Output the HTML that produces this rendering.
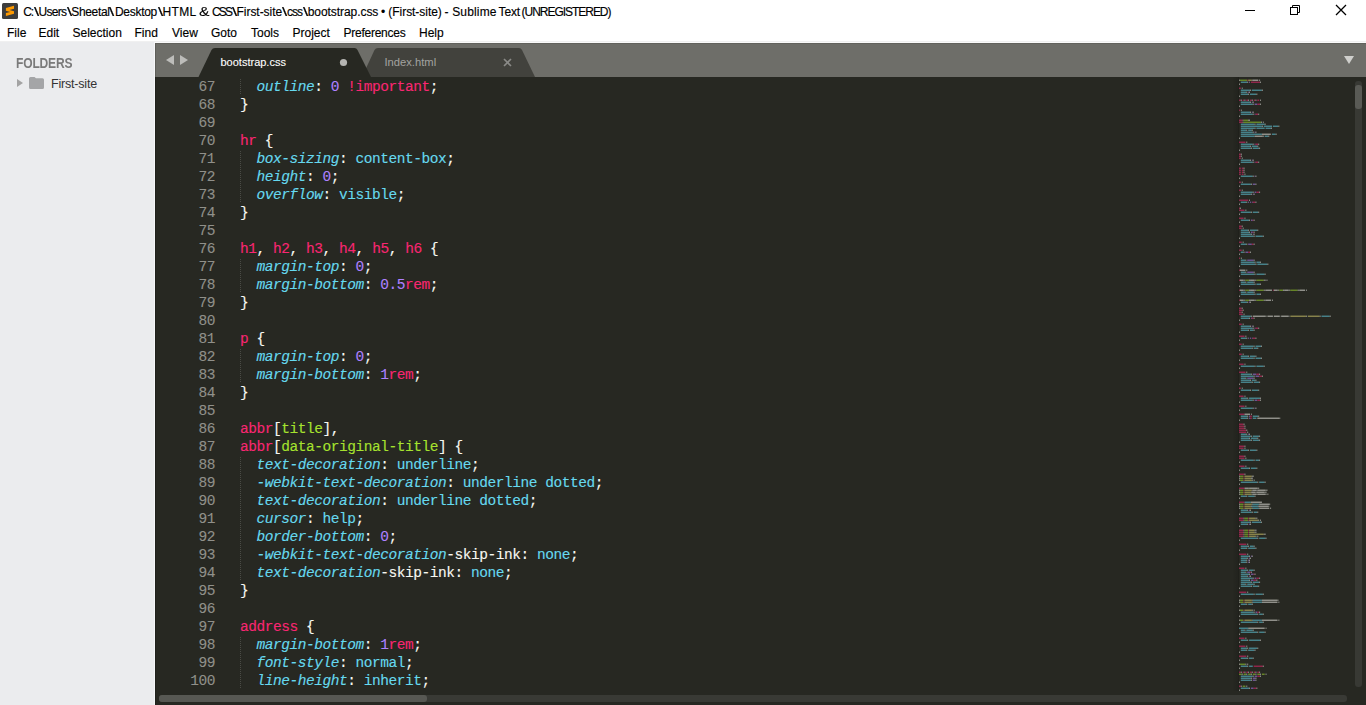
<!DOCTYPE html>
<html><head><meta charset="utf-8"><title>Sublime Text</title>
<style>
*{margin:0;padding:0;box-sizing:border-box}
html,body{width:1366px;height:705px;overflow:hidden;background:#fff}
body{position:relative;font-family:"Liberation Sans",sans-serif}
.abs{position:absolute}
#titlebar{position:absolute;left:0;top:0;width:1366px;height:41px;background:#fff}
#title{position:absolute;left:23.5px;top:4px;font-size:12px;letter-spacing:-0.2px;color:#000;white-space:pre;line-height:16px}
.ts{position:absolute;top:4px;font-size:12px;color:#000;white-space:pre;line-height:16px;-webkit-text-stroke:0.15px #000}
.mi{position:absolute;top:25px;font-size:12px;color:#000;line-height:16px;white-space:pre;-webkit-text-stroke:0.15px #000}
#sep1{position:absolute;left:0;top:41px;width:1366px;height:1px;background:#f0f0f0}
#sidebar{position:absolute;left:0;top:42px;width:154px;height:663px;background:#ebecee}
#sbedge{position:absolute;left:154px;top:42px;width:1px;height:663px;background:#f6f7f9}
#folders{position:absolute;left:15.8px;top:55px;font-size:14px;font-weight:bold;color:#7a7a7a;line-height:16px;letter-spacing:-0.2px;transform:scaleX(0.86);transform-origin:0 0}
#fsite{position:absolute;left:51px;top:76px;font-size:12.5px;color:#333;line-height:16px;letter-spacing:-0.2px}
#editor{position:absolute;left:155px;top:42px;width:1211px;height:663px;background:#272822;overflow:hidden}
#tabbar{position:absolute;left:155px;top:43px;width:1211px;height:34px;background:#6e6e69;border-top:1px solid #62625d;border-left:1px solid #5e5e59}
#edtop{position:absolute;left:155px;top:42px;width:1211px;height:1px;background:#fafafa}
.ln{position:absolute;left:156px;width:59px;text-align:right;font-family:"Liberation Mono",monospace;font-size:14.5px;letter-spacing:-0.45px;line-height:18px;color:#90908a;white-space:pre;-webkit-text-stroke:0.12px currentColor}
.cl{position:absolute;left:240px;font-family:"Liberation Mono",monospace;font-size:14.5px;letter-spacing:-0.45px;line-height:18px;color:#f8f8f2;white-space:pre;-webkit-text-stroke:0.12px currentColor}
.t{color:#f92672}.u{color:#f92672}.p{color:#66d9ef;font-style:italic}.v{color:#66d9ef}.n{color:#ae81ff}.w{color:#f8f8f2}.g{color:#a6e22e}.y{color:#e6db74}
.ig{position:absolute;left:240px;width:1px;background-image:linear-gradient(#4a4b45 50%,transparent 50%);background-size:1px 2px}
.mini{position:absolute;left:-1238px;top:-77px;opacity:0.5}
#minimap{position:absolute;left:1238px;top:77px;width:110px;height:628px;overflow:hidden}
.mtxt{position:absolute;left:1px;top:2px;font-family:"Liberation Mono",monospace;font-size:13.75px;line-height:18px;white-space:pre;color:#f8f8f2;transform:scale(0.11111);transform-origin:0 0;opacity:1}
#mmedge{position:absolute;left:1238px;top:77px;width:1px;height:614px;background:#1f201b}
#mmshadow{position:absolute;left:1232px;top:77px;width:6px;height:614px;background:linear-gradient(90deg,rgba(0,0,0,0),rgba(0,0,0,0.12))}
#vtrack{position:absolute;left:1355px;top:81px;width:7px;height:606px;background:#383934;border-radius:3px}
#vthumb{position:absolute;left:1355px;top:85px;width:7px;height:24px;background:#595a55;border-radius:3px}
#htrack{position:absolute;left:159px;top:695px;width:1188px;height:7px;background:#393a35;border-radius:3px}
#hthumb{position:absolute;left:159px;top:695px;width:268px;height:7px;background:#575853;border-radius:3px}
</style></head><body>
<div id="titlebar"></div>
<svg class="abs" style="left:0;top:0" width="22" height="22" viewBox="0 0 22 22">
<rect x="2" y="3" width="16" height="16" rx="1.5" fill="#3d3d3d"/>
<polygon points="5.9,8 14,5.8 14,8.7 9.4,10 14,11.2 14,13.7 5.9,16.1 5.9,13.1 10.3,12 5.9,10.8" fill="#ff9a00"/>
</svg>
<span class="ts" style="left:23.14px;letter-spacing:-1.024px">C:</span><span class="ts" style="left:33.67px;letter-spacing:0px;transform:scaleX(1.55);transform-origin:0 0">\</span><span class="ts" style="left:38.6px;letter-spacing:-0.742px">Users</span><span class="ts" style="left:66.67px;letter-spacing:0px;transform:scaleX(1.55);transform-origin:0 0">\</span><span class="ts" style="left:71.24px;letter-spacing:-0.333px">Sheetal</span><span class="ts" style="left:109.47px;letter-spacing:0px;transform:scaleX(1.55);transform-origin:0 0">\</span><span class="ts" style="left:114.98px;letter-spacing:-0.286px">Desktop</span><span class="ts" style="left:157.57px;letter-spacing:0px;transform:scaleX(1.55);transform-origin:0 0">\</span><span class="ts" style="left:162.48px;letter-spacing:0.373px">HTML</span><span class="ts" style="left:198.79px;letter-spacing:0px;transform:scaleX(1.3);transform-origin:0 0">&amp;</span><span class="ts" style="left:212.04px;letter-spacing:-1.835px">CSS</span><span class="ts" style="left:232.17px;letter-spacing:0px;transform:scaleX(1.55);transform-origin:0 0">\</span><span class="ts" style="left:236.58px;letter-spacing:-0.051px">First-site</span><span class="ts" style="left:281.87px;letter-spacing:0px;transform:scaleX(1.55);transform-origin:0 0">\</span><span class="ts" style="left:287.12px;letter-spacing:-1.082px">css</span><span class="ts" style="left:302.77px;letter-spacing:0px;transform:scaleX(1.55);transform-origin:0 0">\</span><span class="ts" style="left:307.7px;letter-spacing:-0.058px">bootstrap.css</span><span class="ts" style="left:381.07px;letter-spacing:0px">•</span><span class="ts" style="left:388.36px;letter-spacing:-0.052px">(First-site)</span><span class="ts" style="left:444.4px;letter-spacing:0px">-</span><span class="ts" style="left:452.14px;letter-spacing:0.166px">Sublime</span><span class="ts" style="left:498.57px;letter-spacing:-0.154px">Text</span><span class="ts" style="left:521.56px;letter-spacing:-1.029px">(UNREGISTERED)</span>
<div class="mi" style="left:7px">File</div><div class="mi" style="left:38.5px">Edit</div><div class="mi" style="left:72.5px">Selection</div><div class="mi" style="left:134.5px">Find</div><div class="mi" style="left:172px">View</div><div class="mi" style="left:211px">Goto</div><div class="mi" style="left:251px">Tools</div><div class="mi" style="left:292.5px">Project</div><div class="mi" style="left:343.5px;letter-spacing:-0.25px">Preferences</div><div class="mi" style="left:419px">Help</div>
<svg class="abs" style="left:1236px;top:0" width="130" height="22" viewBox="1236 0 130 22">
<rect x="1245" y="10" width="10" height="1" fill="#000"/>
<path d="M1292.5 7V5.5H1299.5V12.5H1298" fill="none" stroke="#000" stroke-width="1" stroke-linejoin="miter" stroke-linecap="square"/>
<rect x="1290.5" y="7.5" width="7" height="7" fill="none" stroke="#000" stroke-width="1"/>
<path d="M1336 5L1346 15M1346 5L1336 15" stroke="#000" stroke-width="1.3"/>
</svg>
<div id="sep1"></div>
<div id="sidebar"></div>
<div id="sbedge"></div>
<div id="folders">FOLDERS</div>
<svg class="abs" style="left:0;top:70px" width="60" height="25" viewBox="0 70 60 25">
<polygon points="17,79 23,83 17,87" fill="#a3a3a3"/>
<path d="M29 78.5Q29 77 30.5 77H34.5L36 78.2H42.5Q44 78.2 44 79.7V87.5Q44 89 42.5 89H30.5Q29 89 29 87.5Z" fill="#a4a5a7"/>
</svg>
<div id="fsite">First-site</div>
<div id="editor"></div>
<div id="edtop"></div><div class="abs" style="left:155px;top:77px;width:1px;height:628px;background:#20211c"></div>
<div id="tabbar"></div>
<svg class="abs" style="left:155px;top:43px" width="1211" height="35" viewBox="155 43 1211 35">
<polygon points="166,60 174,55 174,65" fill="#bdbdba"/>
<polygon points="188,60 180,55 180,65" fill="#bdbdba"/>
<path d="M362,77 L374.5,50 Q375.5,48 378,48 L519,48 Q521,48 522,50 L535,77 Z" fill="#42423d"/>
<path d="M198.5,77 L211.5,50 Q212.5,48 215,48 L354.5,48 Q356.5,48 357.5,50 L371,77 Z" fill="#272822"/>
<circle cx="343.5" cy="62.5" r="3.6" fill="#b5b5b2"/>
<path d="M504 59L511 66M511 59L504 66" stroke="#8a8a87" stroke-width="1.6"/>
<polygon points="1344,56 1354,56 1349,64" fill="#cfcfcc"/>
</svg>
<div class="abs" style="left:220.5px;top:54px;font-size:11px;color:#fff;line-height:16px;-webkit-text-stroke:0.1px #fff">bootstrap.css</div>
<div class="abs" style="left:384.5px;top:54px;font-size:11.2px;color:#a3a3a0;line-height:16px">Index.html</div>
<div class="ln" style="top:78px">67</div><div class="ln" style="top:96px">68</div><div class="ln" style="top:114px">69</div><div class="ln" style="top:132px">70</div><div class="ln" style="top:150px">71</div><div class="ln" style="top:168px">72</div><div class="ln" style="top:186px">73</div><div class="ln" style="top:204px">74</div><div class="ln" style="top:222px">75</div><div class="ln" style="top:240px">76</div><div class="ln" style="top:258px">77</div><div class="ln" style="top:276px">78</div><div class="ln" style="top:294px">79</div><div class="ln" style="top:312px">80</div><div class="ln" style="top:330px">81</div><div class="ln" style="top:348px">82</div><div class="ln" style="top:366px">83</div><div class="ln" style="top:384px">84</div><div class="ln" style="top:402px">85</div><div class="ln" style="top:420px">86</div><div class="ln" style="top:438px">87</div><div class="ln" style="top:456px">88</div><div class="ln" style="top:474px">89</div><div class="ln" style="top:492px">90</div><div class="ln" style="top:510px">91</div><div class="ln" style="top:528px">92</div><div class="ln" style="top:546px">93</div><div class="ln" style="top:564px">94</div><div class="ln" style="top:582px">95</div><div class="ln" style="top:600px">96</div><div class="ln" style="top:618px">97</div><div class="ln" style="top:636px">98</div><div class="ln" style="top:654px">99</div><div class="ln" style="top:672px">100</div>
<div class="ig" style="top:79px;height:15px"></div><div class="ig" style="top:151px;height:51px"></div><div class="ig" style="top:259px;height:33px"></div><div class="ig" style="top:349px;height:33px"></div><div class="ig" style="top:457px;height:123px"></div><div class="ig" style="top:637px;height:51px"></div>
<div class="cl" style="top:78px">  <span class="p">outline</span><span class="w">: </span><span class="n">0</span><span class="w"> </span><span class="u">!important</span><span class="w">;</span></div><div class="cl" style="top:96px"><span class="w">}</span></div><div class="cl" style="top:114px"></div><div class="cl" style="top:132px"><span class="t">hr</span><span class="w"> {</span></div><div class="cl" style="top:150px">  <span class="p">box-sizing</span><span class="w">: </span><span class="v">content-box</span><span class="w">;</span></div><div class="cl" style="top:168px">  <span class="p">height</span><span class="w">: </span><span class="n">0</span><span class="w">;</span></div><div class="cl" style="top:186px">  <span class="p">overflow</span><span class="w">: </span><span class="v">visible</span><span class="w">;</span></div><div class="cl" style="top:204px"><span class="w">}</span></div><div class="cl" style="top:222px"></div><div class="cl" style="top:240px"><span class="t">h1</span><span class="w">, </span><span class="t">h2</span><span class="w">, </span><span class="t">h3</span><span class="w">, </span><span class="t">h4</span><span class="w">, </span><span class="t">h5</span><span class="w">, </span><span class="t">h6</span><span class="w"> {</span></div><div class="cl" style="top:258px">  <span class="p">margin-top</span><span class="w">: </span><span class="n">0</span><span class="w">;</span></div><div class="cl" style="top:276px">  <span class="p">margin-bottom</span><span class="w">: </span><span class="n">0.5</span><span class="u">rem</span><span class="w">;</span></div><div class="cl" style="top:294px"><span class="w">}</span></div><div class="cl" style="top:312px"></div><div class="cl" style="top:330px"><span class="t">p</span><span class="w"> {</span></div><div class="cl" style="top:348px">  <span class="p">margin-top</span><span class="w">: </span><span class="n">0</span><span class="w">;</span></div><div class="cl" style="top:366px">  <span class="p">margin-bottom</span><span class="w">: </span><span class="n">1</span><span class="u">rem</span><span class="w">;</span></div><div class="cl" style="top:384px"><span class="w">}</span></div><div class="cl" style="top:402px"></div><div class="cl" style="top:420px"><span class="t">abbr</span><span class="w">[</span><span class="g">title</span><span class="w">],</span></div><div class="cl" style="top:438px"><span class="t">abbr</span><span class="w">[</span><span class="g">data-original-title</span><span class="w">] {</span></div><div class="cl" style="top:456px">  <span class="p">text-decoration</span><span class="w">: </span><span class="v">underline</span><span class="w">;</span></div><div class="cl" style="top:474px">  <span class="p">-webkit-text-decoration</span><span class="w">: </span><span class="v">underline dotted</span><span class="w">;</span></div><div class="cl" style="top:492px">  <span class="p">text-decoration</span><span class="w">: </span><span class="v">underline dotted</span><span class="w">;</span></div><div class="cl" style="top:510px">  <span class="p">cursor</span><span class="w">: </span><span class="v">help</span><span class="w">;</span></div><div class="cl" style="top:528px">  <span class="p">border-bottom</span><span class="w">: </span><span class="n">0</span><span class="w">;</span></div><div class="cl" style="top:546px">  <span class="p">-webkit-text-decoration</span><span class="w">-skip-ink: </span><span class="v">none</span><span class="w">;</span></div><div class="cl" style="top:564px">  <span class="p">text-decoration</span><span class="w">-skip-ink: </span><span class="v">none</span><span class="w">;</span></div><div class="cl" style="top:582px"><span class="w">}</span></div><div class="cl" style="top:600px"></div><div class="cl" style="top:618px"><span class="t">address</span><span class="w"> {</span></div><div class="cl" style="top:636px">  <span class="p">margin-bottom</span><span class="w">: </span><span class="n">1</span><span class="u">rem</span><span class="w">;</span></div><div class="cl" style="top:654px">  <span class="p">font-style</span><span class="w">: </span><span class="v">normal</span><span class="w">;</span></div><div class="cl" style="top:672px">  <span class="p">line-height</span><span class="w">: </span><span class="v">inherit</span><span class="w">;</span></div>
<div id="minimap"><svg class="mini" width="1366" height="705" viewBox="0 0 1366 705"><defs><pattern id="mp" x="0" y="79" width="4" height="2" patternUnits="userSpaceOnUse"><rect x="0" y="0" width="4" height="1" fill="#777"/><rect x="0" y="1" width="4" height="1" fill="#fff"/></pattern><mask id="mm"><rect x="1200" y="0" width="166" height="705" fill="url(#mp)"/></mask></defs><g mask="url(#mm)"><rect x="1239.00" y="79" width="0.92" height="2" fill="#F8F8F2"/><rect x="1239.92" y="79" width="7.33" height="2" fill="#A6E22E"/><rect x="1247.25" y="79" width="0.92" height="2" fill="#F92672"/><rect x="1248.17" y="79" width="3.67" height="2" fill="#E6DB74"/><rect x="1251.83" y="79" width="0.92" height="2" fill="#F8F8F2"/><rect x="1252.75" y="79" width="5.50" height="2" fill="#F8F8F2"/><rect x="1259.17" y="79" width="0.92" height="2" fill="#F8F8F2"/><rect x="1240.83" y="81" width="6.42" height="2" fill="#66D9EF"/><rect x="1247.25" y="81" width="0.92" height="2" fill="#F8F8F2"/><rect x="1249.08" y="81" width="0.92" height="2" fill="#AE81FF"/><rect x="1250.92" y="81" width="9.17" height="2" fill="#F92672"/><rect x="1260.08" y="81" width="0.92" height="2" fill="#F8F8F2"/><rect x="1239.00" y="83" width="0.92" height="2" fill="#F8F8F2"/><rect x="1239.00" y="87" width="1.83" height="2" fill="#F92672"/><rect x="1241.75" y="87" width="0.92" height="2" fill="#F8F8F2"/><rect x="1240.83" y="89" width="9.17" height="2" fill="#66D9EF"/><rect x="1250.00" y="89" width="0.92" height="2" fill="#F8F8F2"/><rect x="1251.83" y="89" width="10.08" height="2" fill="#66D9EF"/><rect x="1261.92" y="89" width="0.92" height="2" fill="#F8F8F2"/><rect x="1240.83" y="91" width="5.50" height="2" fill="#66D9EF"/><rect x="1246.33" y="91" width="0.92" height="2" fill="#F8F8F2"/><rect x="1248.17" y="91" width="0.92" height="2" fill="#AE81FF"/><rect x="1249.08" y="91" width="0.92" height="2" fill="#F8F8F2"/><rect x="1240.83" y="93" width="7.33" height="2" fill="#66D9EF"/><rect x="1248.17" y="93" width="0.92" height="2" fill="#F8F8F2"/><rect x="1250.00" y="93" width="6.42" height="2" fill="#66D9EF"/><rect x="1256.42" y="93" width="0.92" height="2" fill="#F8F8F2"/><rect x="1239.00" y="95" width="0.92" height="2" fill="#F8F8F2"/><rect x="1239.00" y="99" width="1.83" height="2" fill="#F92672"/><rect x="1240.83" y="99" width="0.92" height="2" fill="#F8F8F2"/><rect x="1242.67" y="99" width="1.83" height="2" fill="#F92672"/><rect x="1244.50" y="99" width="0.92" height="2" fill="#F8F8F2"/><rect x="1246.33" y="99" width="1.83" height="2" fill="#F92672"/><rect x="1248.17" y="99" width="0.92" height="2" fill="#F8F8F2"/><rect x="1250.00" y="99" width="1.83" height="2" fill="#F92672"/><rect x="1251.83" y="99" width="0.92" height="2" fill="#F8F8F2"/><rect x="1253.67" y="99" width="1.83" height="2" fill="#F92672"/><rect x="1255.50" y="99" width="0.92" height="2" fill="#F8F8F2"/><rect x="1257.33" y="99" width="1.83" height="2" fill="#F92672"/><rect x="1260.08" y="99" width="0.92" height="2" fill="#F8F8F2"/><rect x="1240.83" y="101" width="9.17" height="2" fill="#66D9EF"/><rect x="1250.00" y="101" width="0.92" height="2" fill="#F8F8F2"/><rect x="1251.83" y="101" width="0.92" height="2" fill="#AE81FF"/><rect x="1252.75" y="101" width="0.92" height="2" fill="#F8F8F2"/><rect x="1240.83" y="103" width="11.92" height="2" fill="#66D9EF"/><rect x="1252.75" y="103" width="0.92" height="2" fill="#F8F8F2"/><rect x="1254.58" y="103" width="2.75" height="2" fill="#AE81FF"/><rect x="1257.33" y="103" width="2.75" height="2" fill="#F92672"/><rect x="1260.08" y="103" width="0.92" height="2" fill="#F8F8F2"/><rect x="1239.00" y="105" width="0.92" height="2" fill="#F8F8F2"/><rect x="1239.00" y="109" width="0.92" height="2" fill="#F92672"/><rect x="1240.83" y="109" width="0.92" height="2" fill="#F8F8F2"/><rect x="1240.83" y="111" width="9.17" height="2" fill="#66D9EF"/><rect x="1250.00" y="111" width="0.92" height="2" fill="#F8F8F2"/><rect x="1251.83" y="111" width="0.92" height="2" fill="#AE81FF"/><rect x="1252.75" y="111" width="0.92" height="2" fill="#F8F8F2"/><rect x="1240.83" y="113" width="11.92" height="2" fill="#66D9EF"/><rect x="1252.75" y="113" width="0.92" height="2" fill="#F8F8F2"/><rect x="1254.58" y="113" width="0.92" height="2" fill="#AE81FF"/><rect x="1255.50" y="113" width="2.75" height="2" fill="#F92672"/><rect x="1258.25" y="113" width="0.92" height="2" fill="#F8F8F2"/><rect x="1239.00" y="115" width="0.92" height="2" fill="#F8F8F2"/><rect x="1239.00" y="119" width="3.67" height="2" fill="#F92672"/><rect x="1242.67" y="119" width="0.92" height="2" fill="#F8F8F2"/><rect x="1243.58" y="119" width="4.58" height="2" fill="#A6E22E"/><rect x="1248.17" y="119" width="0.92" height="2" fill="#F8F8F2"/><rect x="1249.08" y="119" width="0.92" height="2" fill="#F8F8F2"/><rect x="1239.00" y="121" width="3.67" height="2" fill="#F92672"/><rect x="1242.67" y="121" width="0.92" height="2" fill="#F8F8F2"/><rect x="1243.58" y="121" width="17.42" height="2" fill="#A6E22E"/><rect x="1261.00" y="121" width="0.92" height="2" fill="#F8F8F2"/><rect x="1262.83" y="121" width="0.92" height="2" fill="#F8F8F2"/><rect x="1240.83" y="123" width="13.75" height="2" fill="#66D9EF"/><rect x="1254.58" y="123" width="0.92" height="2" fill="#F8F8F2"/><rect x="1256.42" y="123" width="8.25" height="2" fill="#66D9EF"/><rect x="1264.67" y="123" width="0.92" height="2" fill="#F8F8F2"/><rect x="1240.83" y="125" width="21.08" height="2" fill="#66D9EF"/><rect x="1261.92" y="125" width="0.92" height="2" fill="#F8F8F2"/><rect x="1263.75" y="125" width="8.25" height="2" fill="#66D9EF"/><rect x="1272.92" y="125" width="5.50" height="2" fill="#66D9EF"/><rect x="1278.42" y="125" width="0.92" height="2" fill="#F8F8F2"/><rect x="1240.83" y="127" width="13.75" height="2" fill="#66D9EF"/><rect x="1254.58" y="127" width="0.92" height="2" fill="#F8F8F2"/><rect x="1256.42" y="127" width="8.25" height="2" fill="#66D9EF"/><rect x="1265.58" y="127" width="5.50" height="2" fill="#66D9EF"/><rect x="1271.08" y="127" width="0.92" height="2" fill="#F8F8F2"/><rect x="1240.83" y="129" width="5.50" height="2" fill="#66D9EF"/><rect x="1246.33" y="129" width="0.92" height="2" fill="#F8F8F2"/><rect x="1248.17" y="129" width="3.67" height="2" fill="#66D9EF"/><rect x="1251.83" y="129" width="0.92" height="2" fill="#F8F8F2"/><rect x="1240.83" y="131" width="11.92" height="2" fill="#66D9EF"/><rect x="1252.75" y="131" width="0.92" height="2" fill="#F8F8F2"/><rect x="1254.58" y="131" width="0.92" height="2" fill="#AE81FF"/><rect x="1255.50" y="131" width="0.92" height="2" fill="#F8F8F2"/><rect x="1240.83" y="133" width="21.08" height="2" fill="#66D9EF"/><rect x="1261.92" y="133" width="8.25" height="2" fill="#F8F8F2"/><rect x="1270.17" y="133" width="0.92" height="2" fill="#F8F8F2"/><rect x="1272.00" y="133" width="3.67" height="2" fill="#66D9EF"/><rect x="1275.67" y="133" width="0.92" height="2" fill="#F8F8F2"/><rect x="1240.83" y="135" width="13.75" height="2" fill="#66D9EF"/><rect x="1254.58" y="135" width="8.25" height="2" fill="#F8F8F2"/><rect x="1262.83" y="135" width="0.92" height="2" fill="#F8F8F2"/><rect x="1264.67" y="135" width="3.67" height="2" fill="#66D9EF"/><rect x="1268.33" y="135" width="0.92" height="2" fill="#F8F8F2"/><rect x="1239.00" y="137" width="0.92" height="2" fill="#F8F8F2"/><rect x="1239.00" y="141" width="6.42" height="2" fill="#F92672"/><rect x="1246.33" y="141" width="0.92" height="2" fill="#F8F8F2"/><rect x="1240.83" y="143" width="11.92" height="2" fill="#66D9EF"/><rect x="1252.75" y="143" width="0.92" height="2" fill="#F8F8F2"/><rect x="1254.58" y="143" width="0.92" height="2" fill="#AE81FF"/><rect x="1255.50" y="143" width="2.75" height="2" fill="#F92672"/><rect x="1258.25" y="143" width="0.92" height="2" fill="#F8F8F2"/><rect x="1240.83" y="145" width="9.17" height="2" fill="#66D9EF"/><rect x="1250.00" y="145" width="0.92" height="2" fill="#F8F8F2"/><rect x="1251.83" y="145" width="5.50" height="2" fill="#66D9EF"/><rect x="1257.33" y="145" width="0.92" height="2" fill="#F8F8F2"/><rect x="1240.83" y="147" width="10.08" height="2" fill="#66D9EF"/><rect x="1250.92" y="147" width="0.92" height="2" fill="#F8F8F2"/><rect x="1252.75" y="147" width="6.42" height="2" fill="#66D9EF"/><rect x="1259.17" y="147" width="0.92" height="2" fill="#F8F8F2"/><rect x="1239.00" y="149" width="0.92" height="2" fill="#F8F8F2"/><rect x="1239.00" y="153" width="1.83" height="2" fill="#F92672"/><rect x="1240.83" y="153" width="0.92" height="2" fill="#F8F8F2"/><rect x="1239.00" y="155" width="1.83" height="2" fill="#F92672"/><rect x="1240.83" y="155" width="0.92" height="2" fill="#F8F8F2"/><rect x="1239.00" y="157" width="1.83" height="2" fill="#F92672"/><rect x="1241.75" y="157" width="0.92" height="2" fill="#F8F8F2"/><rect x="1240.83" y="159" width="9.17" height="2" fill="#66D9EF"/><rect x="1250.00" y="159" width="0.92" height="2" fill="#F8F8F2"/><rect x="1251.83" y="159" width="0.92" height="2" fill="#AE81FF"/><rect x="1252.75" y="159" width="0.92" height="2" fill="#F8F8F2"/><rect x="1240.83" y="161" width="11.92" height="2" fill="#66D9EF"/><rect x="1252.75" y="161" width="0.92" height="2" fill="#F8F8F2"/><rect x="1254.58" y="161" width="0.92" height="2" fill="#AE81FF"/><rect x="1255.50" y="161" width="2.75" height="2" fill="#F92672"/><rect x="1258.25" y="161" width="0.92" height="2" fill="#F8F8F2"/><rect x="1239.00" y="163" width="0.92" height="2" fill="#F8F8F2"/><rect x="1239.00" y="167" width="1.83" height="2" fill="#F92672"/><rect x="1241.75" y="167" width="1.83" height="2" fill="#F92672"/><rect x="1243.58" y="167" width="0.92" height="2" fill="#F8F8F2"/><rect x="1239.00" y="169" width="1.83" height="2" fill="#F92672"/><rect x="1241.75" y="169" width="1.83" height="2" fill="#F92672"/><rect x="1243.58" y="169" width="0.92" height="2" fill="#F8F8F2"/><rect x="1239.00" y="171" width="1.83" height="2" fill="#F92672"/><rect x="1241.75" y="171" width="1.83" height="2" fill="#F92672"/><rect x="1243.58" y="171" width="0.92" height="2" fill="#F8F8F2"/><rect x="1239.00" y="173" width="1.83" height="2" fill="#F92672"/><rect x="1241.75" y="173" width="1.83" height="2" fill="#F92672"/><rect x="1244.50" y="173" width="0.92" height="2" fill="#F8F8F2"/><rect x="1240.83" y="175" width="11.92" height="2" fill="#66D9EF"/><rect x="1252.75" y="175" width="0.92" height="2" fill="#F8F8F2"/><rect x="1254.58" y="175" width="0.92" height="2" fill="#AE81FF"/><rect x="1255.50" y="175" width="0.92" height="2" fill="#F8F8F2"/><rect x="1239.00" y="177" width="0.92" height="2" fill="#F8F8F2"/><rect x="1239.00" y="181" width="1.83" height="2" fill="#F92672"/><rect x="1241.75" y="181" width="0.92" height="2" fill="#F8F8F2"/><rect x="1240.83" y="183" width="10.08" height="2" fill="#66D9EF"/><rect x="1250.92" y="183" width="0.92" height="2" fill="#F8F8F2"/><rect x="1252.75" y="183" width="2.75" height="2" fill="#AE81FF"/><rect x="1255.50" y="183" width="0.92" height="2" fill="#F8F8F2"/><rect x="1239.00" y="185" width="0.92" height="2" fill="#F8F8F2"/><rect x="1239.00" y="189" width="1.83" height="2" fill="#F92672"/><rect x="1241.75" y="189" width="0.92" height="2" fill="#F8F8F2"/><rect x="1240.83" y="191" width="11.92" height="2" fill="#66D9EF"/><rect x="1252.75" y="191" width="0.92" height="2" fill="#F8F8F2"/><rect x="1254.58" y="191" width="1.83" height="2" fill="#AE81FF"/><rect x="1256.42" y="191" width="2.75" height="2" fill="#F92672"/><rect x="1259.17" y="191" width="0.92" height="2" fill="#F8F8F2"/><rect x="1240.83" y="193" width="10.08" height="2" fill="#66D9EF"/><rect x="1250.92" y="193" width="0.92" height="2" fill="#F8F8F2"/><rect x="1252.75" y="193" width="0.92" height="2" fill="#AE81FF"/><rect x="1253.67" y="193" width="0.92" height="2" fill="#F8F8F2"/><rect x="1239.00" y="195" width="0.92" height="2" fill="#F8F8F2"/><rect x="1239.00" y="199" width="9.17" height="2" fill="#F92672"/><rect x="1249.08" y="199" width="0.92" height="2" fill="#F8F8F2"/><rect x="1240.83" y="201" width="5.50" height="2" fill="#66D9EF"/><rect x="1246.33" y="201" width="0.92" height="2" fill="#F8F8F2"/><rect x="1248.17" y="201" width="0.92" height="2" fill="#AE81FF"/><rect x="1250.00" y="201" width="0.92" height="2" fill="#AE81FF"/><rect x="1251.83" y="201" width="0.92" height="2" fill="#AE81FF"/><rect x="1252.75" y="201" width="2.75" height="2" fill="#F92672"/><rect x="1255.50" y="201" width="0.92" height="2" fill="#F8F8F2"/><rect x="1239.00" y="203" width="0.92" height="2" fill="#F8F8F2"/><rect x="1239.00" y="207" width="0.92" height="2" fill="#F92672"/><rect x="1239.92" y="207" width="0.92" height="2" fill="#F8F8F2"/><rect x="1239.00" y="209" width="5.50" height="2" fill="#F92672"/><rect x="1245.42" y="209" width="0.92" height="2" fill="#F8F8F2"/><rect x="1240.83" y="211" width="10.08" height="2" fill="#66D9EF"/><rect x="1250.92" y="211" width="0.92" height="2" fill="#F8F8F2"/><rect x="1252.75" y="211" width="5.50" height="2" fill="#66D9EF"/><rect x="1258.25" y="211" width="0.92" height="2" fill="#F8F8F2"/><rect x="1239.00" y="213" width="0.92" height="2" fill="#F8F8F2"/><rect x="1239.00" y="217" width="4.58" height="2" fill="#F92672"/><rect x="1244.50" y="217" width="0.92" height="2" fill="#F8F8F2"/><rect x="1240.83" y="219" width="8.25" height="2" fill="#66D9EF"/><rect x="1249.08" y="219" width="0.92" height="2" fill="#F8F8F2"/><rect x="1250.92" y="219" width="1.83" height="2" fill="#AE81FF"/><rect x="1252.75" y="219" width="0.92" height="2" fill="#F92672"/><rect x="1253.67" y="219" width="0.92" height="2" fill="#F8F8F2"/><rect x="1239.00" y="221" width="0.92" height="2" fill="#F8F8F2"/><rect x="1239.00" y="225" width="2.75" height="2" fill="#F92672"/><rect x="1241.75" y="225" width="0.92" height="2" fill="#F8F8F2"/><rect x="1239.00" y="227" width="2.75" height="2" fill="#F92672"/><rect x="1242.67" y="227" width="0.92" height="2" fill="#F8F8F2"/><rect x="1240.83" y="229" width="7.33" height="2" fill="#66D9EF"/><rect x="1248.17" y="229" width="0.92" height="2" fill="#F8F8F2"/><rect x="1250.00" y="229" width="7.33" height="2" fill="#66D9EF"/><rect x="1257.33" y="229" width="0.92" height="2" fill="#F8F8F2"/><rect x="1240.83" y="231" width="8.25" height="2" fill="#66D9EF"/><rect x="1249.08" y="231" width="0.92" height="2" fill="#F8F8F2"/><rect x="1250.92" y="231" width="1.83" height="2" fill="#AE81FF"/><rect x="1252.75" y="231" width="0.92" height="2" fill="#F92672"/><rect x="1253.67" y="231" width="0.92" height="2" fill="#F8F8F2"/><rect x="1240.83" y="233" width="10.08" height="2" fill="#66D9EF"/><rect x="1250.92" y="233" width="0.92" height="2" fill="#F8F8F2"/><rect x="1252.75" y="233" width="0.92" height="2" fill="#AE81FF"/><rect x="1253.67" y="233" width="0.92" height="2" fill="#F8F8F2"/><rect x="1240.83" y="235" width="12.83" height="2" fill="#66D9EF"/><rect x="1253.67" y="235" width="0.92" height="2" fill="#F8F8F2"/><rect x="1255.50" y="235" width="7.33" height="2" fill="#66D9EF"/><rect x="1262.83" y="235" width="0.92" height="2" fill="#F8F8F2"/><rect x="1239.00" y="237" width="0.92" height="2" fill="#F8F8F2"/><rect x="1239.00" y="241" width="2.75" height="2" fill="#F92672"/><rect x="1242.67" y="241" width="0.92" height="2" fill="#F8F8F2"/><rect x="1240.83" y="243" width="5.50" height="2" fill="#66D9EF"/><rect x="1246.33" y="243" width="0.92" height="2" fill="#F8F8F2"/><rect x="1248.17" y="243" width="3.67" height="2" fill="#AE81FF"/><rect x="1251.83" y="243" width="1.83" height="2" fill="#F92672"/><rect x="1253.67" y="243" width="0.92" height="2" fill="#F8F8F2"/><rect x="1239.00" y="245" width="0.92" height="2" fill="#F8F8F2"/><rect x="1239.00" y="249" width="2.75" height="2" fill="#F92672"/><rect x="1242.67" y="249" width="0.92" height="2" fill="#F8F8F2"/><rect x="1240.83" y="251" width="2.75" height="2" fill="#66D9EF"/><rect x="1243.58" y="251" width="0.92" height="2" fill="#F8F8F2"/><rect x="1245.42" y="251" width="2.75" height="2" fill="#AE81FF"/><rect x="1248.17" y="251" width="1.83" height="2" fill="#F92672"/><rect x="1250.00" y="251" width="0.92" height="2" fill="#F8F8F2"/><rect x="1239.00" y="253" width="0.92" height="2" fill="#F8F8F2"/><rect x="1239.00" y="257" width="0.92" height="2" fill="#F92672"/><rect x="1240.83" y="257" width="0.92" height="2" fill="#F8F8F2"/><rect x="1240.83" y="259" width="4.58" height="2" fill="#66D9EF"/><rect x="1245.42" y="259" width="0.92" height="2" fill="#F8F8F2"/><rect x="1247.25" y="259" width="6.42" height="2" fill="#AE81FF"/><rect x="1253.67" y="259" width="0.92" height="2" fill="#F8F8F2"/><rect x="1240.83" y="261" width="13.75" height="2" fill="#66D9EF"/><rect x="1254.58" y="261" width="0.92" height="2" fill="#F8F8F2"/><rect x="1256.42" y="261" width="3.67" height="2" fill="#66D9EF"/><rect x="1260.08" y="261" width="0.92" height="2" fill="#F8F8F2"/><rect x="1240.83" y="263" width="14.67" height="2" fill="#66D9EF"/><rect x="1255.50" y="263" width="0.92" height="2" fill="#F8F8F2"/><rect x="1257.33" y="263" width="10.08" height="2" fill="#66D9EF"/><rect x="1267.42" y="263" width="0.92" height="2" fill="#F8F8F2"/><rect x="1239.00" y="265" width="0.92" height="2" fill="#F8F8F2"/><rect x="1239.00" y="269" width="0.92" height="2" fill="#F92672"/><rect x="1239.92" y="269" width="5.50" height="2" fill="#F8F8F2"/><rect x="1246.33" y="269" width="0.92" height="2" fill="#F8F8F2"/><rect x="1240.83" y="271" width="4.58" height="2" fill="#66D9EF"/><rect x="1245.42" y="271" width="0.92" height="2" fill="#F8F8F2"/><rect x="1247.25" y="271" width="6.42" height="2" fill="#AE81FF"/><rect x="1253.67" y="271" width="0.92" height="2" fill="#F8F8F2"/><rect x="1240.83" y="273" width="13.75" height="2" fill="#66D9EF"/><rect x="1254.58" y="273" width="0.92" height="2" fill="#F8F8F2"/><rect x="1256.42" y="273" width="8.25" height="2" fill="#66D9EF"/><rect x="1264.67" y="273" width="0.92" height="2" fill="#F8F8F2"/><rect x="1239.00" y="275" width="0.92" height="2" fill="#F8F8F2"/><rect x="1239.00" y="279" width="0.92" height="2" fill="#F92672"/><rect x="1239.92" y="279" width="3.67" height="2" fill="#F8F8F2"/><rect x="1243.58" y="279" width="0.92" height="2" fill="#F8F8F2"/><rect x="1244.50" y="279" width="0.92" height="2" fill="#F8F8F2"/><rect x="1245.42" y="279" width="3.67" height="2" fill="#A6E22E"/><rect x="1249.08" y="279" width="0.92" height="2" fill="#F8F8F2"/><rect x="1250.00" y="279" width="0.92" height="2" fill="#F8F8F2"/><rect x="1250.92" y="279" width="3.67" height="2" fill="#F8F8F2"/><rect x="1254.58" y="279" width="0.92" height="2" fill="#F8F8F2"/><rect x="1255.50" y="279" width="0.92" height="2" fill="#F8F8F2"/><rect x="1256.42" y="279" width="7.33" height="2" fill="#A6E22E"/><rect x="1263.75" y="279" width="0.92" height="2" fill="#F8F8F2"/><rect x="1264.67" y="279" width="0.92" height="2" fill="#F8F8F2"/><rect x="1266.50" y="279" width="0.92" height="2" fill="#F8F8F2"/><rect x="1240.83" y="281" width="4.58" height="2" fill="#66D9EF"/><rect x="1245.42" y="281" width="0.92" height="2" fill="#F8F8F2"/><rect x="1247.25" y="281" width="6.42" height="2" fill="#66D9EF"/><rect x="1253.67" y="281" width="0.92" height="2" fill="#F8F8F2"/><rect x="1240.83" y="283" width="13.75" height="2" fill="#66D9EF"/><rect x="1254.58" y="283" width="0.92" height="2" fill="#F8F8F2"/><rect x="1256.42" y="283" width="3.67" height="2" fill="#66D9EF"/><rect x="1260.08" y="283" width="0.92" height="2" fill="#F8F8F2"/><rect x="1239.00" y="285" width="0.92" height="2" fill="#F8F8F2"/><rect x="1239.00" y="289" width="0.92" height="2" fill="#F92672"/><rect x="1239.92" y="289" width="3.67" height="2" fill="#F8F8F2"/><rect x="1243.58" y="289" width="0.92" height="2" fill="#F8F8F2"/><rect x="1244.50" y="289" width="0.92" height="2" fill="#F8F8F2"/><rect x="1245.42" y="289" width="3.67" height="2" fill="#A6E22E"/><rect x="1249.08" y="289" width="0.92" height="2" fill="#F8F8F2"/><rect x="1250.00" y="289" width="0.92" height="2" fill="#F8F8F2"/><rect x="1250.92" y="289" width="3.67" height="2" fill="#F8F8F2"/><rect x="1254.58" y="289" width="0.92" height="2" fill="#F8F8F2"/><rect x="1255.50" y="289" width="0.92" height="2" fill="#F8F8F2"/><rect x="1256.42" y="289" width="7.33" height="2" fill="#A6E22E"/><rect x="1263.75" y="289" width="0.92" height="2" fill="#F8F8F2"/><rect x="1264.67" y="289" width="0.92" height="2" fill="#F8F8F2"/><rect x="1265.58" y="289" width="5.50" height="2" fill="#F8F8F2"/><rect x="1271.08" y="289" width="0.92" height="2" fill="#F8F8F2"/><rect x="1272.92" y="289" width="0.92" height="2" fill="#F92672"/><rect x="1273.83" y="289" width="3.67" height="2" fill="#F8F8F2"/><rect x="1277.50" y="289" width="0.92" height="2" fill="#F8F8F2"/><rect x="1278.42" y="289" width="0.92" height="2" fill="#F8F8F2"/><rect x="1279.33" y="289" width="3.67" height="2" fill="#A6E22E"/><rect x="1283.00" y="289" width="0.92" height="2" fill="#F8F8F2"/><rect x="1283.92" y="289" width="0.92" height="2" fill="#F8F8F2"/><rect x="1284.84" y="289" width="3.67" height="2" fill="#F8F8F2"/><rect x="1288.50" y="289" width="0.92" height="2" fill="#F8F8F2"/><rect x="1289.42" y="289" width="0.92" height="2" fill="#F8F8F2"/><rect x="1290.34" y="289" width="7.33" height="2" fill="#A6E22E"/><rect x="1297.67" y="289" width="0.92" height="2" fill="#F8F8F2"/><rect x="1298.59" y="289" width="0.92" height="2" fill="#F8F8F2"/><rect x="1299.50" y="289" width="5.50" height="2" fill="#F8F8F2"/><rect x="1305.92" y="289" width="0.92" height="2" fill="#F8F8F2"/><rect x="1240.83" y="291" width="4.58" height="2" fill="#66D9EF"/><rect x="1245.42" y="291" width="0.92" height="2" fill="#F8F8F2"/><rect x="1247.25" y="291" width="6.42" height="2" fill="#66D9EF"/><rect x="1253.67" y="291" width="0.92" height="2" fill="#F8F8F2"/><rect x="1240.83" y="293" width="13.75" height="2" fill="#66D9EF"/><rect x="1254.58" y="293" width="0.92" height="2" fill="#F8F8F2"/><rect x="1256.42" y="293" width="3.67" height="2" fill="#66D9EF"/><rect x="1260.08" y="293" width="0.92" height="2" fill="#F8F8F2"/><rect x="1239.00" y="295" width="0.92" height="2" fill="#F8F8F2"/><rect x="1239.00" y="299" width="0.92" height="2" fill="#F92672"/><rect x="1239.92" y="299" width="3.67" height="2" fill="#F8F8F2"/><rect x="1243.58" y="299" width="0.92" height="2" fill="#F8F8F2"/><rect x="1244.50" y="299" width="0.92" height="2" fill="#F8F8F2"/><rect x="1245.42" y="299" width="3.67" height="2" fill="#A6E22E"/><rect x="1249.08" y="299" width="0.92" height="2" fill="#F8F8F2"/><rect x="1250.00" y="299" width="0.92" height="2" fill="#F8F8F2"/><rect x="1250.92" y="299" width="3.67" height="2" fill="#F8F8F2"/><rect x="1254.58" y="299" width="0.92" height="2" fill="#F8F8F2"/><rect x="1255.50" y="299" width="0.92" height="2" fill="#F8F8F2"/><rect x="1256.42" y="299" width="7.33" height="2" fill="#A6E22E"/><rect x="1263.75" y="299" width="0.92" height="2" fill="#F8F8F2"/><rect x="1264.67" y="299" width="0.92" height="2" fill="#F8F8F2"/><rect x="1265.58" y="299" width="5.50" height="2" fill="#F8F8F2"/><rect x="1272.00" y="299" width="0.92" height="2" fill="#F8F8F2"/><rect x="1240.83" y="301" width="6.42" height="2" fill="#66D9EF"/><rect x="1247.25" y="301" width="0.92" height="2" fill="#F8F8F2"/><rect x="1249.08" y="301" width="0.92" height="2" fill="#AE81FF"/><rect x="1250.00" y="301" width="0.92" height="2" fill="#F8F8F2"/><rect x="1239.00" y="303" width="0.92" height="2" fill="#F8F8F2"/><rect x="1239.00" y="307" width="2.75" height="2" fill="#F92672"/><rect x="1241.75" y="307" width="0.92" height="2" fill="#F8F8F2"/><rect x="1239.00" y="309" width="3.67" height="2" fill="#F92672"/><rect x="1242.67" y="309" width="0.92" height="2" fill="#F8F8F2"/><rect x="1239.00" y="311" width="2.75" height="2" fill="#F92672"/><rect x="1241.75" y="311" width="0.92" height="2" fill="#F8F8F2"/><rect x="1239.00" y="313" width="3.67" height="2" fill="#F92672"/><rect x="1243.58" y="313" width="0.92" height="2" fill="#F8F8F2"/><rect x="1240.83" y="315" width="10.08" height="2" fill="#66D9EF"/><rect x="1250.92" y="315" width="0.92" height="2" fill="#F8F8F2"/><rect x="1252.75" y="315" width="12.83" height="2" fill="#F8F8F2"/><rect x="1265.58" y="315" width="0.92" height="2" fill="#F8F8F2"/><rect x="1267.42" y="315" width="4.58" height="2" fill="#F8F8F2"/><rect x="1272.00" y="315" width="0.92" height="2" fill="#F8F8F2"/><rect x="1273.83" y="315" width="5.50" height="2" fill="#F8F8F2"/><rect x="1279.33" y="315" width="0.92" height="2" fill="#F8F8F2"/><rect x="1281.17" y="315" width="7.33" height="2" fill="#F8F8F2"/><rect x="1288.50" y="315" width="0.92" height="2" fill="#F8F8F2"/><rect x="1290.34" y="315" width="15.58" height="2" fill="#E6DB74"/><rect x="1305.92" y="315" width="0.92" height="2" fill="#F8F8F2"/><rect x="1307.75" y="315" width="11.92" height="2" fill="#E6DB74"/><rect x="1319.67" y="315" width="0.92" height="2" fill="#F8F8F2"/><rect x="1321.50" y="315" width="8.25" height="2" fill="#66D9EF"/><rect x="1329.75" y="315" width="0.92" height="2" fill="#F8F8F2"/><rect x="1240.83" y="317" width="8.25" height="2" fill="#66D9EF"/><rect x="1249.08" y="317" width="0.92" height="2" fill="#F8F8F2"/><rect x="1250.92" y="317" width="0.92" height="2" fill="#AE81FF"/><rect x="1251.83" y="317" width="1.83" height="2" fill="#F92672"/><rect x="1253.67" y="317" width="0.92" height="2" fill="#F8F8F2"/><rect x="1239.00" y="319" width="0.92" height="2" fill="#F8F8F2"/><rect x="1239.00" y="323" width="2.75" height="2" fill="#F92672"/><rect x="1242.67" y="323" width="0.92" height="2" fill="#F8F8F2"/><rect x="1240.83" y="325" width="9.17" height="2" fill="#66D9EF"/><rect x="1250.00" y="325" width="0.92" height="2" fill="#F8F8F2"/><rect x="1251.83" y="325" width="0.92" height="2" fill="#AE81FF"/><rect x="1252.75" y="325" width="0.92" height="2" fill="#F8F8F2"/><rect x="1240.83" y="327" width="11.92" height="2" fill="#66D9EF"/><rect x="1252.75" y="327" width="0.92" height="2" fill="#F8F8F2"/><rect x="1254.58" y="327" width="0.92" height="2" fill="#AE81FF"/><rect x="1255.50" y="327" width="2.75" height="2" fill="#F92672"/><rect x="1258.25" y="327" width="0.92" height="2" fill="#F8F8F2"/><rect x="1240.83" y="329" width="7.33" height="2" fill="#66D9EF"/><rect x="1248.17" y="329" width="0.92" height="2" fill="#F8F8F2"/><rect x="1250.00" y="329" width="3.67" height="2" fill="#66D9EF"/><rect x="1253.67" y="329" width="0.92" height="2" fill="#F8F8F2"/><rect x="1239.00" y="331" width="0.92" height="2" fill="#F8F8F2"/><rect x="1239.00" y="335" width="5.50" height="2" fill="#F92672"/><rect x="1245.42" y="335" width="0.92" height="2" fill="#F8F8F2"/><rect x="1240.83" y="337" width="5.50" height="2" fill="#66D9EF"/><rect x="1246.33" y="337" width="0.92" height="2" fill="#F8F8F2"/><rect x="1248.17" y="337" width="0.92" height="2" fill="#AE81FF"/><rect x="1250.00" y="337" width="0.92" height="2" fill="#AE81FF"/><rect x="1251.83" y="337" width="0.92" height="2" fill="#AE81FF"/><rect x="1252.75" y="337" width="2.75" height="2" fill="#F92672"/><rect x="1255.50" y="337" width="0.92" height="2" fill="#F8F8F2"/><rect x="1239.00" y="339" width="0.92" height="2" fill="#F8F8F2"/><rect x="1239.00" y="343" width="2.75" height="2" fill="#F92672"/><rect x="1242.67" y="343" width="0.92" height="2" fill="#F8F8F2"/><rect x="1240.83" y="345" width="12.83" height="2" fill="#66D9EF"/><rect x="1253.67" y="345" width="0.92" height="2" fill="#F8F8F2"/><rect x="1255.50" y="345" width="5.50" height="2" fill="#66D9EF"/><rect x="1261.00" y="345" width="0.92" height="2" fill="#F8F8F2"/><rect x="1240.83" y="347" width="11.00" height="2" fill="#66D9EF"/><rect x="1251.83" y="347" width="0.92" height="2" fill="#F8F8F2"/><rect x="1253.67" y="347" width="3.67" height="2" fill="#66D9EF"/><rect x="1257.33" y="347" width="0.92" height="2" fill="#F8F8F2"/><rect x="1239.00" y="349" width="0.92" height="2" fill="#F8F8F2"/><rect x="1239.00" y="353" width="2.75" height="2" fill="#F92672"/><rect x="1242.67" y="353" width="0.92" height="2" fill="#F8F8F2"/><rect x="1240.83" y="355" width="7.33" height="2" fill="#66D9EF"/><rect x="1248.17" y="355" width="0.92" height="2" fill="#F8F8F2"/><rect x="1250.00" y="355" width="5.50" height="2" fill="#66D9EF"/><rect x="1255.50" y="355" width="0.92" height="2" fill="#F8F8F2"/><rect x="1240.83" y="357" width="12.83" height="2" fill="#66D9EF"/><rect x="1253.67" y="357" width="0.92" height="2" fill="#F8F8F2"/><rect x="1255.50" y="357" width="5.50" height="2" fill="#66D9EF"/><rect x="1261.00" y="357" width="0.92" height="2" fill="#F8F8F2"/><rect x="1239.00" y="359" width="0.92" height="2" fill="#F8F8F2"/><rect x="1239.00" y="363" width="4.58" height="2" fill="#F92672"/><rect x="1244.50" y="363" width="0.92" height="2" fill="#F8F8F2"/><rect x="1240.83" y="365" width="13.75" height="2" fill="#66D9EF"/><rect x="1254.58" y="365" width="0.92" height="2" fill="#F8F8F2"/><rect x="1256.42" y="365" width="7.33" height="2" fill="#66D9EF"/><rect x="1263.75" y="365" width="0.92" height="2" fill="#F8F8F2"/><rect x="1239.00" y="367" width="0.92" height="2" fill="#F8F8F2"/><rect x="1239.00" y="371" width="6.42" height="2" fill="#F92672"/><rect x="1246.33" y="371" width="0.92" height="2" fill="#F8F8F2"/><rect x="1240.83" y="373" width="10.08" height="2" fill="#66D9EF"/><rect x="1250.92" y="373" width="0.92" height="2" fill="#F8F8F2"/><rect x="1252.75" y="373" width="3.67" height="2" fill="#AE81FF"/><rect x="1256.42" y="373" width="2.75" height="2" fill="#F92672"/><rect x="1259.17" y="373" width="0.92" height="2" fill="#F8F8F2"/><rect x="1240.83" y="375" width="12.83" height="2" fill="#66D9EF"/><rect x="1253.67" y="375" width="0.92" height="2" fill="#F8F8F2"/><rect x="1255.50" y="375" width="3.67" height="2" fill="#AE81FF"/><rect x="1259.17" y="375" width="2.75" height="2" fill="#F92672"/><rect x="1261.92" y="375" width="0.92" height="2" fill="#F8F8F2"/><rect x="1240.83" y="377" width="4.58" height="2" fill="#66D9EF"/><rect x="1245.42" y="377" width="0.92" height="2" fill="#F8F8F2"/><rect x="1247.25" y="377" width="6.42" height="2" fill="#AE81FF"/><rect x="1253.67" y="377" width="0.92" height="2" fill="#F8F8F2"/><rect x="1240.83" y="379" width="9.17" height="2" fill="#66D9EF"/><rect x="1250.00" y="379" width="0.92" height="2" fill="#F8F8F2"/><rect x="1251.83" y="379" width="3.67" height="2" fill="#66D9EF"/><rect x="1255.50" y="379" width="0.92" height="2" fill="#F8F8F2"/><rect x="1240.83" y="381" width="11.00" height="2" fill="#66D9EF"/><rect x="1251.83" y="381" width="0.92" height="2" fill="#F8F8F2"/><rect x="1253.67" y="381" width="5.50" height="2" fill="#66D9EF"/><rect x="1259.17" y="381" width="0.92" height="2" fill="#F8F8F2"/><rect x="1239.00" y="383" width="0.92" height="2" fill="#F8F8F2"/><rect x="1239.00" y="387" width="1.83" height="2" fill="#F92672"/><rect x="1241.75" y="387" width="0.92" height="2" fill="#F8F8F2"/><rect x="1240.83" y="389" width="9.17" height="2" fill="#66D9EF"/><rect x="1250.00" y="389" width="0.92" height="2" fill="#F8F8F2"/><rect x="1251.83" y="389" width="6.42" height="2" fill="#66D9EF"/><rect x="1258.25" y="389" width="0.92" height="2" fill="#F8F8F2"/><rect x="1239.00" y="391" width="0.92" height="2" fill="#F8F8F2"/><rect x="1239.00" y="395" width="4.58" height="2" fill="#F92672"/><rect x="1244.50" y="395" width="0.92" height="2" fill="#F8F8F2"/><rect x="1240.83" y="397" width="6.42" height="2" fill="#66D9EF"/><rect x="1247.25" y="397" width="0.92" height="2" fill="#F8F8F2"/><rect x="1249.08" y="397" width="11.00" height="2" fill="#66D9EF"/><rect x="1260.08" y="397" width="0.92" height="2" fill="#F8F8F2"/><rect x="1240.83" y="399" width="11.92" height="2" fill="#66D9EF"/><rect x="1252.75" y="399" width="0.92" height="2" fill="#F8F8F2"/><rect x="1254.58" y="399" width="2.75" height="2" fill="#AE81FF"/><rect x="1257.33" y="399" width="2.75" height="2" fill="#F92672"/><rect x="1260.08" y="399" width="0.92" height="2" fill="#F8F8F2"/><rect x="1239.00" y="401" width="0.92" height="2" fill="#F8F8F2"/><rect x="1239.00" y="405" width="5.50" height="2" fill="#F92672"/><rect x="1245.42" y="405" width="0.92" height="2" fill="#F8F8F2"/><rect x="1240.83" y="407" width="11.92" height="2" fill="#66D9EF"/><rect x="1252.75" y="407" width="0.92" height="2" fill="#F8F8F2"/><rect x="1254.58" y="407" width="0.92" height="2" fill="#AE81FF"/><rect x="1255.50" y="407" width="0.92" height="2" fill="#F8F8F2"/><rect x="1239.00" y="409" width="0.92" height="2" fill="#F8F8F2"/><rect x="1239.00" y="413" width="5.50" height="2" fill="#F92672"/><rect x="1244.50" y="413" width="5.50" height="2" fill="#F8F8F2"/><rect x="1250.92" y="413" width="0.92" height="2" fill="#F8F8F2"/><rect x="1240.83" y="415" width="6.42" height="2" fill="#66D9EF"/><rect x="1247.25" y="415" width="0.92" height="2" fill="#F8F8F2"/><rect x="1249.08" y="415" width="0.92" height="2" fill="#AE81FF"/><rect x="1250.00" y="415" width="1.83" height="2" fill="#F92672"/><rect x="1252.75" y="415" width="5.50" height="2" fill="#66D9EF"/><rect x="1258.25" y="415" width="0.92" height="2" fill="#F8F8F2"/><rect x="1240.83" y="417" width="6.42" height="2" fill="#66D9EF"/><rect x="1247.25" y="417" width="0.92" height="2" fill="#F8F8F2"/><rect x="1249.08" y="417" width="0.92" height="2" fill="#AE81FF"/><rect x="1250.00" y="417" width="1.83" height="2" fill="#F92672"/><rect x="1252.75" y="417" width="3.67" height="2" fill="#66D9EF"/><rect x="1257.33" y="417" width="22.00" height="2" fill="#F8F8F2"/><rect x="1279.33" y="417" width="0.92" height="2" fill="#F8F8F2"/><rect x="1239.00" y="419" width="0.92" height="2" fill="#F8F8F2"/><rect x="1239.00" y="423" width="4.58" height="2" fill="#F92672"/><rect x="1243.58" y="423" width="0.92" height="2" fill="#F8F8F2"/><rect x="1239.00" y="425" width="5.50" height="2" fill="#F92672"/><rect x="1244.50" y="425" width="0.92" height="2" fill="#F8F8F2"/><rect x="1239.00" y="427" width="5.50" height="2" fill="#F92672"/><rect x="1244.50" y="427" width="0.92" height="2" fill="#F8F8F2"/><rect x="1239.00" y="429" width="7.33" height="2" fill="#F92672"/><rect x="1246.33" y="429" width="0.92" height="2" fill="#F8F8F2"/><rect x="1239.00" y="431" width="7.33" height="2" fill="#F92672"/><rect x="1247.25" y="431" width="0.92" height="2" fill="#F8F8F2"/><rect x="1240.83" y="433" width="5.50" height="2" fill="#66D9EF"/><rect x="1246.33" y="433" width="0.92" height="2" fill="#F8F8F2"/><rect x="1248.17" y="433" width="0.92" height="2" fill="#AE81FF"/><rect x="1249.08" y="433" width="0.92" height="2" fill="#F8F8F2"/><rect x="1240.83" y="435" width="10.08" height="2" fill="#66D9EF"/><rect x="1250.92" y="435" width="0.92" height="2" fill="#F8F8F2"/><rect x="1252.75" y="435" width="6.42" height="2" fill="#66D9EF"/><rect x="1259.17" y="435" width="0.92" height="2" fill="#F8F8F2"/><rect x="1240.83" y="437" width="8.25" height="2" fill="#66D9EF"/><rect x="1249.08" y="437" width="0.92" height="2" fill="#F8F8F2"/><rect x="1250.92" y="437" width="6.42" height="2" fill="#66D9EF"/><rect x="1257.33" y="437" width="0.92" height="2" fill="#F8F8F2"/><rect x="1240.83" y="439" width="10.08" height="2" fill="#66D9EF"/><rect x="1250.92" y="439" width="0.92" height="2" fill="#F8F8F2"/><rect x="1252.75" y="439" width="6.42" height="2" fill="#66D9EF"/><rect x="1259.17" y="439" width="0.92" height="2" fill="#F8F8F2"/><rect x="1239.00" y="441" width="0.92" height="2" fill="#F8F8F2"/><rect x="1239.00" y="445" width="5.50" height="2" fill="#F92672"/><rect x="1244.50" y="445" width="0.92" height="2" fill="#F8F8F2"/><rect x="1239.00" y="447" width="4.58" height="2" fill="#F92672"/><rect x="1244.50" y="447" width="0.92" height="2" fill="#F8F8F2"/><rect x="1240.83" y="449" width="7.33" height="2" fill="#66D9EF"/><rect x="1248.17" y="449" width="0.92" height="2" fill="#F8F8F2"/><rect x="1250.00" y="449" width="6.42" height="2" fill="#66D9EF"/><rect x="1256.42" y="449" width="0.92" height="2" fill="#F8F8F2"/><rect x="1239.00" y="451" width="0.92" height="2" fill="#F8F8F2"/><rect x="1239.00" y="455" width="5.50" height="2" fill="#F92672"/><rect x="1244.50" y="455" width="0.92" height="2" fill="#F8F8F2"/><rect x="1239.00" y="457" width="5.50" height="2" fill="#F92672"/><rect x="1245.42" y="457" width="0.92" height="2" fill="#F8F8F2"/><rect x="1240.83" y="459" width="12.83" height="2" fill="#66D9EF"/><rect x="1253.67" y="459" width="0.92" height="2" fill="#F8F8F2"/><rect x="1255.50" y="459" width="3.67" height="2" fill="#66D9EF"/><rect x="1259.17" y="459" width="0.92" height="2" fill="#F8F8F2"/><rect x="1239.00" y="461" width="0.92" height="2" fill="#F8F8F2"/><rect x="1239.00" y="465" width="5.50" height="2" fill="#F92672"/><rect x="1245.42" y="465" width="0.92" height="2" fill="#F8F8F2"/><rect x="1240.83" y="467" width="8.25" height="2" fill="#66D9EF"/><rect x="1249.08" y="467" width="0.92" height="2" fill="#F8F8F2"/><rect x="1250.92" y="467" width="5.50" height="2" fill="#66D9EF"/><rect x="1256.42" y="467" width="0.92" height="2" fill="#F8F8F2"/><rect x="1239.00" y="469" width="0.92" height="2" fill="#F8F8F2"/><rect x="1239.00" y="473" width="5.50" height="2" fill="#F92672"/><rect x="1244.50" y="473" width="0.92" height="2" fill="#F8F8F2"/><rect x="1239.00" y="475" width="0.92" height="2" fill="#F8F8F2"/><rect x="1239.92" y="475" width="3.67" height="2" fill="#A6E22E"/><rect x="1243.58" y="475" width="0.92" height="2" fill="#F92672"/><rect x="1244.50" y="475" width="7.33" height="2" fill="#E6DB74"/><rect x="1251.83" y="475" width="0.92" height="2" fill="#F8F8F2"/><rect x="1252.75" y="475" width="0.92" height="2" fill="#F8F8F2"/><rect x="1239.00" y="477" width="0.92" height="2" fill="#F8F8F2"/><rect x="1239.92" y="477" width="3.67" height="2" fill="#A6E22E"/><rect x="1243.58" y="477" width="0.92" height="2" fill="#F92672"/><rect x="1244.50" y="477" width="6.42" height="2" fill="#E6DB74"/><rect x="1250.92" y="477" width="0.92" height="2" fill="#F8F8F2"/><rect x="1251.83" y="477" width="0.92" height="2" fill="#F8F8F2"/><rect x="1239.00" y="479" width="0.92" height="2" fill="#F8F8F2"/><rect x="1239.92" y="479" width="3.67" height="2" fill="#A6E22E"/><rect x="1243.58" y="479" width="0.92" height="2" fill="#F92672"/><rect x="1244.50" y="479" width="7.33" height="2" fill="#E6DB74"/><rect x="1251.83" y="479" width="0.92" height="2" fill="#F8F8F2"/><rect x="1253.67" y="479" width="0.92" height="2" fill="#F8F8F2"/><rect x="1240.83" y="481" width="16.50" height="2" fill="#66D9EF"/><rect x="1257.33" y="481" width="0.92" height="2" fill="#F8F8F2"/><rect x="1259.17" y="481" width="5.50" height="2" fill="#66D9EF"/><rect x="1264.67" y="481" width="0.92" height="2" fill="#F8F8F2"/><rect x="1239.00" y="483" width="0.92" height="2" fill="#F8F8F2"/><rect x="1239.00" y="487" width="5.50" height="2" fill="#F92672"/><rect x="1244.50" y="487" width="3.67" height="2" fill="#F8F8F2"/><rect x="1248.17" y="487" width="0.92" height="2" fill="#F8F8F2"/><rect x="1249.08" y="487" width="8.25" height="2" fill="#F8F8F2"/><rect x="1257.33" y="487" width="0.92" height="2" fill="#F8F8F2"/><rect x="1258.25" y="487" width="0.92" height="2" fill="#F8F8F2"/><rect x="1239.00" y="489" width="0.92" height="2" fill="#F8F8F2"/><rect x="1239.92" y="489" width="3.67" height="2" fill="#A6E22E"/><rect x="1243.58" y="489" width="0.92" height="2" fill="#F92672"/><rect x="1244.50" y="489" width="7.33" height="2" fill="#E6DB74"/><rect x="1251.83" y="489" width="0.92" height="2" fill="#F8F8F2"/><rect x="1252.75" y="489" width="3.67" height="2" fill="#F8F8F2"/><rect x="1256.42" y="489" width="0.92" height="2" fill="#F8F8F2"/><rect x="1257.33" y="489" width="8.25" height="2" fill="#F8F8F2"/><rect x="1265.58" y="489" width="0.92" height="2" fill="#F8F8F2"/><rect x="1266.50" y="489" width="0.92" height="2" fill="#F8F8F2"/><rect x="1239.00" y="491" width="0.92" height="2" fill="#F8F8F2"/><rect x="1239.92" y="491" width="3.67" height="2" fill="#A6E22E"/><rect x="1243.58" y="491" width="0.92" height="2" fill="#F92672"/><rect x="1244.50" y="491" width="6.42" height="2" fill="#E6DB74"/><rect x="1250.92" y="491" width="0.92" height="2" fill="#F8F8F2"/><rect x="1251.83" y="491" width="3.67" height="2" fill="#F8F8F2"/><rect x="1255.50" y="491" width="0.92" height="2" fill="#F8F8F2"/><rect x="1256.42" y="491" width="8.25" height="2" fill="#F8F8F2"/><rect x="1264.67" y="491" width="0.92" height="2" fill="#F8F8F2"/><rect x="1265.58" y="491" width="0.92" height="2" fill="#F8F8F2"/><rect x="1239.00" y="493" width="0.92" height="2" fill="#F8F8F2"/><rect x="1239.92" y="493" width="3.67" height="2" fill="#A6E22E"/><rect x="1243.58" y="493" width="0.92" height="2" fill="#F92672"/><rect x="1244.50" y="493" width="7.33" height="2" fill="#E6DB74"/><rect x="1251.83" y="493" width="0.92" height="2" fill="#F8F8F2"/><rect x="1252.75" y="493" width="3.67" height="2" fill="#F8F8F2"/><rect x="1256.42" y="493" width="0.92" height="2" fill="#F8F8F2"/><rect x="1257.33" y="493" width="8.25" height="2" fill="#F8F8F2"/><rect x="1265.58" y="493" width="0.92" height="2" fill="#F8F8F2"/><rect x="1267.42" y="493" width="0.92" height="2" fill="#F8F8F2"/><rect x="1240.83" y="495" width="5.50" height="2" fill="#66D9EF"/><rect x="1246.33" y="495" width="0.92" height="2" fill="#F8F8F2"/><rect x="1248.17" y="495" width="6.42" height="2" fill="#66D9EF"/><rect x="1254.58" y="495" width="0.92" height="2" fill="#F8F8F2"/><rect x="1239.00" y="497" width="0.92" height="2" fill="#F8F8F2"/><rect x="1239.00" y="501" width="5.50" height="2" fill="#F92672"/><rect x="1244.50" y="501" width="6.42" height="2" fill="#66D9EF"/><rect x="1250.92" y="501" width="10.08" height="2" fill="#F8F8F2"/><rect x="1261.00" y="501" width="0.92" height="2" fill="#F8F8F2"/><rect x="1239.00" y="503" width="0.92" height="2" fill="#F8F8F2"/><rect x="1239.92" y="503" width="3.67" height="2" fill="#A6E22E"/><rect x="1243.58" y="503" width="0.92" height="2" fill="#F92672"/><rect x="1244.50" y="503" width="7.33" height="2" fill="#E6DB74"/><rect x="1251.83" y="503" width="0.92" height="2" fill="#F8F8F2"/><rect x="1252.75" y="503" width="6.42" height="2" fill="#66D9EF"/><rect x="1259.17" y="503" width="10.08" height="2" fill="#F8F8F2"/><rect x="1269.25" y="503" width="0.92" height="2" fill="#F8F8F2"/><rect x="1239.00" y="505" width="0.92" height="2" fill="#F8F8F2"/><rect x="1239.92" y="505" width="3.67" height="2" fill="#A6E22E"/><rect x="1243.58" y="505" width="0.92" height="2" fill="#F92672"/><rect x="1244.50" y="505" width="6.42" height="2" fill="#E6DB74"/><rect x="1250.92" y="505" width="0.92" height="2" fill="#F8F8F2"/><rect x="1251.83" y="505" width="6.42" height="2" fill="#66D9EF"/><rect x="1258.25" y="505" width="10.08" height="2" fill="#F8F8F2"/><rect x="1268.33" y="505" width="0.92" height="2" fill="#F8F8F2"/><rect x="1239.00" y="507" width="0.92" height="2" fill="#F8F8F2"/><rect x="1239.92" y="507" width="3.67" height="2" fill="#A6E22E"/><rect x="1243.58" y="507" width="0.92" height="2" fill="#F92672"/><rect x="1244.50" y="507" width="7.33" height="2" fill="#E6DB74"/><rect x="1251.83" y="507" width="0.92" height="2" fill="#F8F8F2"/><rect x="1252.75" y="507" width="6.42" height="2" fill="#66D9EF"/><rect x="1259.17" y="507" width="10.08" height="2" fill="#F8F8F2"/><rect x="1270.17" y="507" width="0.92" height="2" fill="#F8F8F2"/><rect x="1240.83" y="509" width="6.42" height="2" fill="#66D9EF"/><rect x="1247.25" y="509" width="0.92" height="2" fill="#F8F8F2"/><rect x="1249.08" y="509" width="0.92" height="2" fill="#AE81FF"/><rect x="1250.00" y="509" width="0.92" height="2" fill="#F8F8F2"/><rect x="1240.83" y="511" width="11.00" height="2" fill="#66D9EF"/><rect x="1251.83" y="511" width="0.92" height="2" fill="#F8F8F2"/><rect x="1253.67" y="511" width="3.67" height="2" fill="#66D9EF"/><rect x="1257.33" y="511" width="0.92" height="2" fill="#F8F8F2"/><rect x="1239.00" y="513" width="0.92" height="2" fill="#F8F8F2"/><rect x="1239.00" y="517" width="4.58" height="2" fill="#F92672"/><rect x="1243.58" y="517" width="0.92" height="2" fill="#F8F8F2"/><rect x="1244.50" y="517" width="3.67" height="2" fill="#A6E22E"/><rect x="1248.17" y="517" width="0.92" height="2" fill="#F92672"/><rect x="1249.08" y="517" width="6.42" height="2" fill="#E6DB74"/><rect x="1255.50" y="517" width="0.92" height="2" fill="#F8F8F2"/><rect x="1256.42" y="517" width="0.92" height="2" fill="#F8F8F2"/><rect x="1239.00" y="519" width="4.58" height="2" fill="#F92672"/><rect x="1243.58" y="519" width="0.92" height="2" fill="#F8F8F2"/><rect x="1244.50" y="519" width="3.67" height="2" fill="#A6E22E"/><rect x="1248.17" y="519" width="0.92" height="2" fill="#F92672"/><rect x="1249.08" y="519" width="9.17" height="2" fill="#E6DB74"/><rect x="1258.25" y="519" width="0.92" height="2" fill="#F8F8F2"/><rect x="1260.08" y="519" width="0.92" height="2" fill="#F8F8F2"/><rect x="1240.83" y="521" width="9.17" height="2" fill="#66D9EF"/><rect x="1250.00" y="521" width="0.92" height="2" fill="#F8F8F2"/><rect x="1251.83" y="521" width="9.17" height="2" fill="#66D9EF"/><rect x="1261.00" y="521" width="0.92" height="2" fill="#F8F8F2"/><rect x="1240.83" y="523" width="6.42" height="2" fill="#66D9EF"/><rect x="1247.25" y="523" width="0.92" height="2" fill="#F8F8F2"/><rect x="1249.08" y="523" width="0.92" height="2" fill="#AE81FF"/><rect x="1250.00" y="523" width="0.92" height="2" fill="#F8F8F2"/><rect x="1239.00" y="525" width="0.92" height="2" fill="#F8F8F2"/><rect x="1239.00" y="529" width="4.58" height="2" fill="#F92672"/><rect x="1243.58" y="529" width="0.92" height="2" fill="#F8F8F2"/><rect x="1244.50" y="529" width="3.67" height="2" fill="#A6E22E"/><rect x="1248.17" y="529" width="0.92" height="2" fill="#F92672"/><rect x="1249.08" y="529" width="5.50" height="2" fill="#E6DB74"/><rect x="1254.58" y="529" width="0.92" height="2" fill="#F8F8F2"/><rect x="1255.50" y="529" width="0.92" height="2" fill="#F8F8F2"/><rect x="1239.00" y="531" width="4.58" height="2" fill="#F92672"/><rect x="1243.58" y="531" width="0.92" height="2" fill="#F8F8F2"/><rect x="1244.50" y="531" width="3.67" height="2" fill="#A6E22E"/><rect x="1248.17" y="531" width="0.92" height="2" fill="#F92672"/><rect x="1249.08" y="531" width="5.50" height="2" fill="#E6DB74"/><rect x="1254.58" y="531" width="0.92" height="2" fill="#F8F8F2"/><rect x="1255.50" y="531" width="0.92" height="2" fill="#F8F8F2"/><rect x="1239.00" y="533" width="4.58" height="2" fill="#F92672"/><rect x="1243.58" y="533" width="0.92" height="2" fill="#F8F8F2"/><rect x="1244.50" y="533" width="3.67" height="2" fill="#A6E22E"/><rect x="1248.17" y="533" width="0.92" height="2" fill="#F92672"/><rect x="1249.08" y="533" width="14.67" height="2" fill="#E6DB74"/><rect x="1263.75" y="533" width="0.92" height="2" fill="#F8F8F2"/><rect x="1264.67" y="533" width="0.92" height="2" fill="#F8F8F2"/><rect x="1239.00" y="535" width="4.58" height="2" fill="#F92672"/><rect x="1243.58" y="535" width="0.92" height="2" fill="#F8F8F2"/><rect x="1244.50" y="535" width="3.67" height="2" fill="#A6E22E"/><rect x="1248.17" y="535" width="0.92" height="2" fill="#F92672"/><rect x="1249.08" y="535" width="6.42" height="2" fill="#E6DB74"/><rect x="1255.50" y="535" width="0.92" height="2" fill="#F8F8F2"/><rect x="1257.33" y="535" width="0.92" height="2" fill="#F8F8F2"/><rect x="1240.83" y="537" width="16.50" height="2" fill="#66D9EF"/><rect x="1257.33" y="537" width="0.92" height="2" fill="#F8F8F2"/><rect x="1259.17" y="537" width="6.42" height="2" fill="#66D9EF"/><rect x="1265.58" y="537" width="0.92" height="2" fill="#F8F8F2"/><rect x="1239.00" y="539" width="0.92" height="2" fill="#F8F8F2"/><rect x="1239.00" y="543" width="7.33" height="2" fill="#F92672"/><rect x="1247.25" y="543" width="0.92" height="2" fill="#F8F8F2"/><rect x="1240.83" y="545" width="7.33" height="2" fill="#66D9EF"/><rect x="1248.17" y="545" width="0.92" height="2" fill="#F8F8F2"/><rect x="1250.00" y="545" width="3.67" height="2" fill="#66D9EF"/><rect x="1253.67" y="545" width="0.92" height="2" fill="#F8F8F2"/><rect x="1240.83" y="547" width="5.50" height="2" fill="#66D9EF"/><rect x="1246.33" y="547" width="0.92" height="2" fill="#F8F8F2"/><rect x="1248.17" y="547" width="7.33" height="2" fill="#66D9EF"/><rect x="1255.50" y="547" width="0.92" height="2" fill="#F8F8F2"/><rect x="1239.00" y="549" width="0.92" height="2" fill="#F8F8F2"/><rect x="1239.00" y="553" width="7.33" height="2" fill="#F92672"/><rect x="1247.25" y="553" width="0.92" height="2" fill="#F8F8F2"/><rect x="1240.83" y="555" width="8.25" height="2" fill="#66D9EF"/><rect x="1249.08" y="555" width="0.92" height="2" fill="#F8F8F2"/><rect x="1250.92" y="555" width="0.92" height="2" fill="#AE81FF"/><rect x="1251.83" y="555" width="0.92" height="2" fill="#F8F8F2"/><rect x="1240.83" y="557" width="6.42" height="2" fill="#66D9EF"/><rect x="1247.25" y="557" width="0.92" height="2" fill="#F8F8F2"/><rect x="1249.08" y="557" width="0.92" height="2" fill="#AE81FF"/><rect x="1250.00" y="557" width="0.92" height="2" fill="#F8F8F2"/><rect x="1240.83" y="559" width="5.50" height="2" fill="#66D9EF"/><rect x="1246.33" y="559" width="0.92" height="2" fill="#F8F8F2"/><rect x="1248.17" y="559" width="0.92" height="2" fill="#AE81FF"/><rect x="1249.08" y="559" width="0.92" height="2" fill="#F8F8F2"/><rect x="1240.83" y="561" width="5.50" height="2" fill="#66D9EF"/><rect x="1246.33" y="561" width="0.92" height="2" fill="#F8F8F2"/><rect x="1248.17" y="561" width="0.92" height="2" fill="#AE81FF"/><rect x="1249.08" y="561" width="0.92" height="2" fill="#F8F8F2"/><rect x="1239.00" y="563" width="0.92" height="2" fill="#F8F8F2"/><rect x="1239.00" y="567" width="5.50" height="2" fill="#F92672"/><rect x="1245.42" y="567" width="0.92" height="2" fill="#F8F8F2"/><rect x="1240.83" y="569" width="6.42" height="2" fill="#66D9EF"/><rect x="1247.25" y="569" width="0.92" height="2" fill="#F8F8F2"/><rect x="1249.08" y="569" width="4.58" height="2" fill="#66D9EF"/><rect x="1253.67" y="569" width="0.92" height="2" fill="#F8F8F2"/><rect x="1240.83" y="571" width="4.58" height="2" fill="#66D9EF"/><rect x="1245.42" y="571" width="0.92" height="2" fill="#F8F8F2"/><rect x="1247.25" y="571" width="2.75" height="2" fill="#AE81FF"/><rect x="1250.00" y="571" width="0.92" height="2" fill="#F92672"/><rect x="1250.92" y="571" width="0.92" height="2" fill="#F8F8F2"/><rect x="1240.83" y="573" width="8.25" height="2" fill="#66D9EF"/><rect x="1249.08" y="573" width="0.92" height="2" fill="#F8F8F2"/><rect x="1250.92" y="573" width="2.75" height="2" fill="#AE81FF"/><rect x="1253.67" y="573" width="0.92" height="2" fill="#F92672"/><rect x="1254.58" y="573" width="0.92" height="2" fill="#F8F8F2"/><rect x="1240.83" y="575" width="6.42" height="2" fill="#66D9EF"/><rect x="1247.25" y="575" width="0.92" height="2" fill="#F8F8F2"/><rect x="1249.08" y="575" width="0.92" height="2" fill="#AE81FF"/><rect x="1250.00" y="575" width="0.92" height="2" fill="#F8F8F2"/><rect x="1240.83" y="577" width="11.92" height="2" fill="#66D9EF"/><rect x="1252.75" y="577" width="0.92" height="2" fill="#F8F8F2"/><rect x="1254.58" y="577" width="1.83" height="2" fill="#AE81FF"/><rect x="1256.42" y="577" width="2.75" height="2" fill="#F92672"/><rect x="1259.17" y="577" width="0.92" height="2" fill="#F8F8F2"/><rect x="1240.83" y="579" width="8.25" height="2" fill="#66D9EF"/><rect x="1249.08" y="579" width="0.92" height="2" fill="#F8F8F2"/><rect x="1250.92" y="579" width="2.75" height="2" fill="#AE81FF"/><rect x="1253.67" y="579" width="2.75" height="2" fill="#F92672"/><rect x="1256.42" y="579" width="0.92" height="2" fill="#F8F8F2"/><rect x="1240.83" y="581" width="10.08" height="2" fill="#66D9EF"/><rect x="1250.92" y="581" width="0.92" height="2" fill="#F8F8F2"/><rect x="1252.75" y="581" width="6.42" height="2" fill="#66D9EF"/><rect x="1259.17" y="581" width="0.92" height="2" fill="#F8F8F2"/><rect x="1240.83" y="583" width="4.58" height="2" fill="#66D9EF"/><rect x="1245.42" y="583" width="0.92" height="2" fill="#F8F8F2"/><rect x="1247.25" y="583" width="6.42" height="2" fill="#66D9EF"/><rect x="1253.67" y="583" width="0.92" height="2" fill="#F8F8F2"/><rect x="1240.83" y="585" width="10.08" height="2" fill="#66D9EF"/><rect x="1250.92" y="585" width="0.92" height="2" fill="#F8F8F2"/><rect x="1252.75" y="585" width="5.50" height="2" fill="#66D9EF"/><rect x="1258.25" y="585" width="0.92" height="2" fill="#F8F8F2"/><rect x="1239.00" y="587" width="0.92" height="2" fill="#F8F8F2"/><rect x="1239.00" y="591" width="7.33" height="2" fill="#F92672"/><rect x="1247.25" y="591" width="0.92" height="2" fill="#F8F8F2"/><rect x="1240.83" y="593" width="12.83" height="2" fill="#66D9EF"/><rect x="1253.67" y="593" width="0.92" height="2" fill="#F8F8F2"/><rect x="1255.50" y="593" width="7.33" height="2" fill="#66D9EF"/><rect x="1262.83" y="593" width="0.92" height="2" fill="#F8F8F2"/><rect x="1239.00" y="595" width="0.92" height="2" fill="#F8F8F2"/><rect x="1239.00" y="599" width="0.92" height="2" fill="#F8F8F2"/><rect x="1239.92" y="599" width="3.67" height="2" fill="#A6E22E"/><rect x="1243.58" y="599" width="0.92" height="2" fill="#F92672"/><rect x="1244.50" y="599" width="7.33" height="2" fill="#E6DB74"/><rect x="1251.83" y="599" width="0.92" height="2" fill="#F8F8F2"/><rect x="1252.75" y="599" width="9.17" height="2" fill="#66D9EF"/><rect x="1261.92" y="599" width="15.58" height="2" fill="#F8F8F2"/><rect x="1277.50" y="599" width="0.92" height="2" fill="#F8F8F2"/><rect x="1239.00" y="601" width="0.92" height="2" fill="#F8F8F2"/><rect x="1239.92" y="601" width="3.67" height="2" fill="#A6E22E"/><rect x="1243.58" y="601" width="0.92" height="2" fill="#F92672"/><rect x="1244.50" y="601" width="7.33" height="2" fill="#E6DB74"/><rect x="1251.83" y="601" width="0.92" height="2" fill="#F8F8F2"/><rect x="1252.75" y="601" width="9.17" height="2" fill="#66D9EF"/><rect x="1261.92" y="601" width="15.58" height="2" fill="#F8F8F2"/><rect x="1278.42" y="601" width="0.92" height="2" fill="#F8F8F2"/><rect x="1240.83" y="603" width="5.50" height="2" fill="#66D9EF"/><rect x="1246.33" y="603" width="0.92" height="2" fill="#F8F8F2"/><rect x="1248.17" y="603" width="3.67" height="2" fill="#66D9EF"/><rect x="1251.83" y="603" width="0.92" height="2" fill="#F8F8F2"/><rect x="1239.00" y="605" width="0.92" height="2" fill="#F8F8F2"/><rect x="1239.00" y="609" width="0.92" height="2" fill="#F8F8F2"/><rect x="1239.92" y="609" width="3.67" height="2" fill="#A6E22E"/><rect x="1243.58" y="609" width="0.92" height="2" fill="#F92672"/><rect x="1244.50" y="609" width="7.33" height="2" fill="#E6DB74"/><rect x="1251.83" y="609" width="0.92" height="2" fill="#F8F8F2"/><rect x="1253.67" y="609" width="0.92" height="2" fill="#F8F8F2"/><rect x="1240.83" y="611" width="12.83" height="2" fill="#66D9EF"/><rect x="1253.67" y="611" width="0.92" height="2" fill="#F8F8F2"/><rect x="1255.50" y="611" width="1.83" height="2" fill="#AE81FF"/><rect x="1257.33" y="611" width="1.83" height="2" fill="#F92672"/><rect x="1259.17" y="611" width="0.92" height="2" fill="#F8F8F2"/><rect x="1240.83" y="613" width="16.50" height="2" fill="#66D9EF"/><rect x="1257.33" y="613" width="0.92" height="2" fill="#F8F8F2"/><rect x="1259.17" y="613" width="3.67" height="2" fill="#66D9EF"/><rect x="1262.83" y="613" width="0.92" height="2" fill="#F8F8F2"/><rect x="1239.00" y="615" width="0.92" height="2" fill="#F8F8F2"/><rect x="1239.00" y="619" width="0.92" height="2" fill="#F8F8F2"/><rect x="1239.92" y="619" width="3.67" height="2" fill="#A6E22E"/><rect x="1243.58" y="619" width="0.92" height="2" fill="#F92672"/><rect x="1244.50" y="619" width="7.33" height="2" fill="#E6DB74"/><rect x="1251.83" y="619" width="0.92" height="2" fill="#F8F8F2"/><rect x="1252.75" y="619" width="9.17" height="2" fill="#66D9EF"/><rect x="1261.92" y="619" width="15.58" height="2" fill="#F8F8F2"/><rect x="1278.42" y="619" width="0.92" height="2" fill="#F8F8F2"/><rect x="1240.83" y="621" width="16.50" height="2" fill="#66D9EF"/><rect x="1257.33" y="621" width="0.92" height="2" fill="#F8F8F2"/><rect x="1259.17" y="621" width="3.67" height="2" fill="#66D9EF"/><rect x="1262.83" y="621" width="0.92" height="2" fill="#F8F8F2"/><rect x="1239.00" y="623" width="0.92" height="2" fill="#F8F8F2"/><rect x="1239.00" y="627" width="9.17" height="2" fill="#66D9EF"/><rect x="1248.17" y="627" width="16.50" height="2" fill="#F8F8F2"/><rect x="1265.58" y="627" width="0.92" height="2" fill="#F8F8F2"/><rect x="1240.83" y="629" width="3.67" height="2" fill="#66D9EF"/><rect x="1244.50" y="629" width="0.92" height="2" fill="#F8F8F2"/><rect x="1246.33" y="629" width="6.42" height="2" fill="#66D9EF"/><rect x="1252.75" y="629" width="0.92" height="2" fill="#F8F8F2"/><rect x="1240.83" y="631" width="16.50" height="2" fill="#66D9EF"/><rect x="1257.33" y="631" width="0.92" height="2" fill="#F8F8F2"/><rect x="1259.17" y="631" width="5.50" height="2" fill="#66D9EF"/><rect x="1264.67" y="631" width="0.92" height="2" fill="#F8F8F2"/><rect x="1239.00" y="633" width="0.92" height="2" fill="#F8F8F2"/><rect x="1239.00" y="637" width="5.50" height="2" fill="#F92672"/><rect x="1245.42" y="637" width="0.92" height="2" fill="#F8F8F2"/><rect x="1240.83" y="639" width="6.42" height="2" fill="#66D9EF"/><rect x="1247.25" y="639" width="0.92" height="2" fill="#F8F8F2"/><rect x="1249.08" y="639" width="11.00" height="2" fill="#66D9EF"/><rect x="1260.08" y="639" width="0.92" height="2" fill="#F8F8F2"/><rect x="1239.00" y="641" width="0.92" height="2" fill="#F8F8F2"/><rect x="1239.00" y="645" width="6.42" height="2" fill="#F92672"/><rect x="1246.33" y="645" width="0.92" height="2" fill="#F8F8F2"/><rect x="1240.83" y="647" width="6.42" height="2" fill="#66D9EF"/><rect x="1247.25" y="647" width="0.92" height="2" fill="#F8F8F2"/><rect x="1249.08" y="647" width="8.25" height="2" fill="#66D9EF"/><rect x="1257.33" y="647" width="0.92" height="2" fill="#F8F8F2"/><rect x="1240.83" y="649" width="5.50" height="2" fill="#66D9EF"/><rect x="1246.33" y="649" width="0.92" height="2" fill="#F8F8F2"/><rect x="1248.17" y="649" width="6.42" height="2" fill="#66D9EF"/><rect x="1254.58" y="649" width="0.92" height="2" fill="#F8F8F2"/><rect x="1239.00" y="651" width="0.92" height="2" fill="#F8F8F2"/><rect x="1239.00" y="655" width="7.33" height="2" fill="#F92672"/><rect x="1247.25" y="655" width="0.92" height="2" fill="#F8F8F2"/><rect x="1240.83" y="657" width="6.42" height="2" fill="#66D9EF"/><rect x="1247.25" y="657" width="0.92" height="2" fill="#F8F8F2"/><rect x="1249.08" y="657" width="3.67" height="2" fill="#66D9EF"/><rect x="1252.75" y="657" width="0.92" height="2" fill="#F8F8F2"/><rect x="1239.00" y="659" width="0.92" height="2" fill="#F8F8F2"/><rect x="1239.00" y="663" width="0.92" height="2" fill="#F8F8F2"/><rect x="1239.92" y="663" width="5.50" height="2" fill="#A6E22E"/><rect x="1245.42" y="663" width="0.92" height="2" fill="#F8F8F2"/><rect x="1247.25" y="663" width="0.92" height="2" fill="#F8F8F2"/><rect x="1240.83" y="665" width="6.42" height="2" fill="#66D9EF"/><rect x="1247.25" y="665" width="0.92" height="2" fill="#F8F8F2"/><rect x="1249.08" y="665" width="3.67" height="2" fill="#66D9EF"/><rect x="1253.67" y="665" width="9.17" height="2" fill="#F92672"/><rect x="1262.83" y="665" width="0.92" height="2" fill="#F8F8F2"/><rect x="1239.00" y="667" width="0.92" height="2" fill="#F8F8F2"/><rect x="1239.00" y="671" width="1.83" height="2" fill="#F92672"/><rect x="1240.83" y="671" width="0.92" height="2" fill="#F8F8F2"/><rect x="1242.67" y="671" width="1.83" height="2" fill="#F92672"/><rect x="1244.50" y="671" width="0.92" height="2" fill="#F8F8F2"/><rect x="1246.33" y="671" width="1.83" height="2" fill="#F92672"/><rect x="1248.17" y="671" width="0.92" height="2" fill="#F8F8F2"/><rect x="1250.00" y="671" width="1.83" height="2" fill="#F92672"/><rect x="1251.83" y="671" width="0.92" height="2" fill="#F8F8F2"/><rect x="1253.67" y="671" width="1.83" height="2" fill="#F92672"/><rect x="1255.50" y="671" width="0.92" height="2" fill="#F8F8F2"/><rect x="1257.33" y="671" width="1.83" height="2" fill="#F92672"/><rect x="1259.17" y="671" width="0.92" height="2" fill="#F8F8F2"/><rect x="1239.00" y="673" width="2.75" height="2" fill="#A6E22E"/><rect x="1241.75" y="673" width="0.92" height="2" fill="#F8F8F2"/><rect x="1243.58" y="673" width="2.75" height="2" fill="#A6E22E"/><rect x="1246.33" y="673" width="0.92" height="2" fill="#F8F8F2"/><rect x="1248.17" y="673" width="2.75" height="2" fill="#A6E22E"/><rect x="1250.92" y="673" width="0.92" height="2" fill="#F8F8F2"/><rect x="1252.75" y="673" width="2.75" height="2" fill="#A6E22E"/><rect x="1255.50" y="673" width="0.92" height="2" fill="#F8F8F2"/><rect x="1257.33" y="673" width="2.75" height="2" fill="#A6E22E"/><rect x="1260.08" y="673" width="0.92" height="2" fill="#F8F8F2"/><rect x="1261.92" y="673" width="2.75" height="2" fill="#A6E22E"/><rect x="1265.58" y="673" width="0.92" height="2" fill="#F8F8F2"/><rect x="1240.83" y="675" width="11.92" height="2" fill="#66D9EF"/><rect x="1252.75" y="675" width="0.92" height="2" fill="#F8F8F2"/><rect x="1254.58" y="675" width="2.75" height="2" fill="#AE81FF"/><rect x="1257.33" y="675" width="2.75" height="2" fill="#F92672"/><rect x="1260.08" y="675" width="0.92" height="2" fill="#F8F8F2"/><rect x="1240.83" y="677" width="10.08" height="2" fill="#66D9EF"/><rect x="1250.92" y="677" width="0.92" height="2" fill="#F8F8F2"/><rect x="1252.75" y="677" width="2.75" height="2" fill="#AE81FF"/><rect x="1255.50" y="677" width="0.92" height="2" fill="#F8F8F2"/><rect x="1240.83" y="679" width="10.08" height="2" fill="#66D9EF"/><rect x="1250.92" y="679" width="0.92" height="2" fill="#F8F8F2"/><rect x="1252.75" y="679" width="2.75" height="2" fill="#AE81FF"/><rect x="1255.50" y="679" width="0.92" height="2" fill="#F8F8F2"/><rect x="1239.00" y="681" width="0.92" height="2" fill="#F8F8F2"/><rect x="1239.00" y="685" width="1.83" height="2" fill="#F92672"/><rect x="1240.83" y="685" width="0.92" height="2" fill="#F8F8F2"/><rect x="1242.67" y="685" width="2.75" height="2" fill="#A6E22E"/><rect x="1246.33" y="685" width="0.92" height="2" fill="#F8F8F2"/><rect x="1240.83" y="687" width="8.25" height="2" fill="#66D9EF"/><rect x="1249.08" y="687" width="0.92" height="2" fill="#F8F8F2"/><rect x="1250.92" y="687" width="2.75" height="2" fill="#AE81FF"/><rect x="1253.67" y="687" width="2.75" height="2" fill="#F92672"/><rect x="1256.42" y="687" width="0.92" height="2" fill="#F8F8F2"/><rect x="1239.00" y="689" width="0.92" height="2" fill="#F8F8F2"/></g></svg></div>
<div id="mmshadow"></div><div id="mmedge"></div>
<div id="vtrack"></div>
<div id="vthumb"></div>
<div id="htrack"></div>
<div id="hthumb"></div>
</body></html>
